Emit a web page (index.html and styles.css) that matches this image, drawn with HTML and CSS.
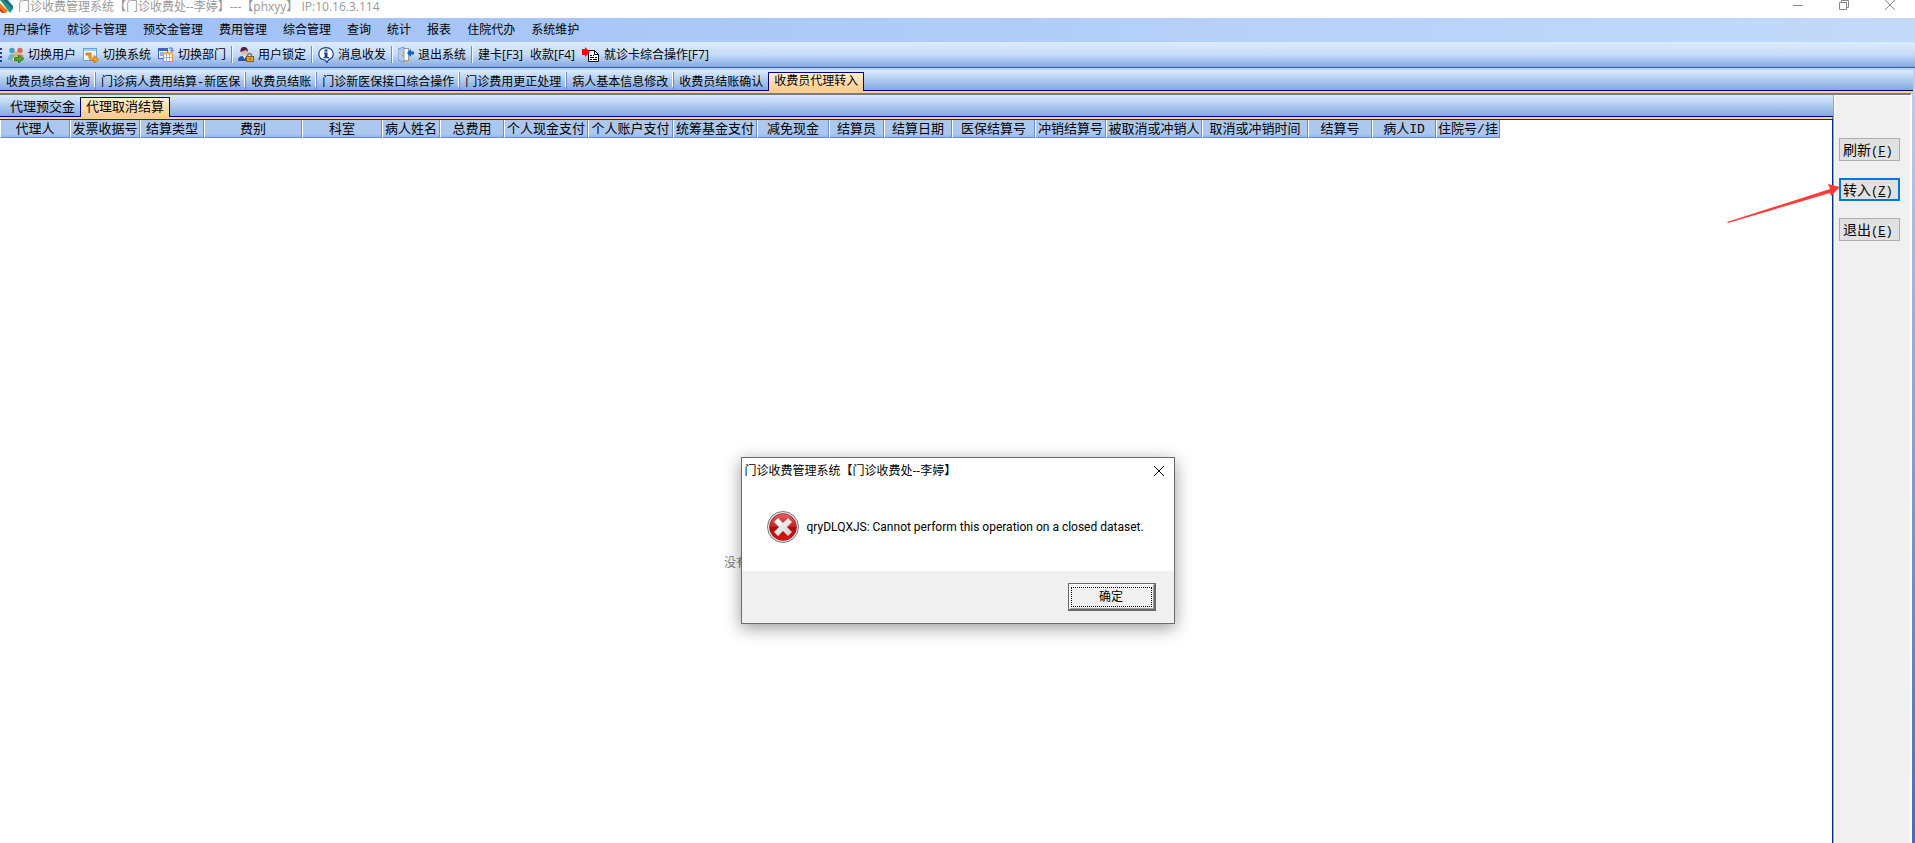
FILE: index.html
```html
<!DOCTYPE html>
<html lang="zh-CN">
<head>
    <meta charset="UTF-8">
    <meta name="viewport" content="width=device-width, initial-scale=1.0">
    <title>门诊收费管理系统</title>
    <link rel="stylesheet" href="styles.css">
</head>
<body>
    <header class="titlebar">
        <svg class="app-icon" width="14" height="14" viewBox="0 0 14 14">
            <path d="M0 0h8l5 6v3l-3 4H7L0 5z" fill="#1b9a8c"/>
            <path d="M3 0h4l6 7v2z" fill="#2d5f75"/>
            <path d="M0 0l10 13H7L0 5z" fill="#fff"/>
            <path d="M0 3l8 8-3 2H3L0 10z" fill="#ef7a1a"/>
            <path d="M0 8l4 5H2L0 11z" fill="#c8371c"/>
        </svg>
        <div class="title-text">门诊收费管理系统【门诊收费处--李婷】---【phxyy】 IP:10.16.3.114</div>
        <div class="window-buttons">
            <button type="button" aria-label="最小化"><svg width="12" height="12" viewBox="0 0 12 12"><path d="M1 5.500h10"/></svg></button>
            <button type="button" aria-label="还原"><svg width="12" height="12" viewBox="0 0 12 12"><path d="M1.500 2.500h7v7h-7zM3.500 2.500v-2h7v7h-2"/></svg></button>
            <button type="button" aria-label="关闭"><svg width="12" height="12" viewBox="0 0 12 12"><path d="M1 0l10 10M11 0L1 10"/></svg></button>
        </div>
    </header>

    <!-- 菜单 -->
    <nav class="menu">
        <a href="#">用户操作</a>
        <a href="#">就诊卡管理</a>
        <a href="#">预交金管理</a>
        <a href="#">费用管理</a>
        <a href="#">综合管理</a>
        <a href="#">查询</a>
        <a href="#">统计</a>
        <a href="#">报表</a>
        <a href="#">住院代办</a>
        <a href="#">系统维护</a>
    </nav>

    <!-- 工具栏 -->
    <div class="toolbar">
        <span class="grip"></span>
        <button type="button">
            <svg width="16" height="16" viewBox="0 0 16 16">
                <circle cx="4" cy="3.500" r="2.700" fill="#4b9bbd"/><path d="M0 13c0-4 1-6 4-6s4 2 4 6z" fill="#6db5d0"/>
                <circle cx="12" cy="3.500" r="2.700" fill="#d8695b"/><path d="M9 13c0-4 1-6 3.500-6S16 9 16 12z" fill="#e08a7c"/>
                <circle cx="8" cy="7" r="2.300" fill="#e9b06a"/><path d="M4 14c0-3 1.500-5 4-5s4 2 4 5z" fill="#f5e4c8" stroke="#b98843" stroke-width=".6"/>
                <path d="M6.500 10.500h4V8l5 4-5 4v-2.500h-4z" fill="#44b02c" stroke="#1c6b13" stroke-width=".8"/>
            </svg>
            切换用户
        </button>
        <button type="button">
            <svg width="16" height="16" viewBox="0 0 16 16">
                <rect x=".5" y="1.500" width="13" height="12" fill="#f4fafe" stroke="#5da9dc"/>
                <path d="M1 2h12v2H1z" fill="#9fd0f0"/>
                <path d="M3 6h5v3c0 2 1 2 3 2V8.500l4.500 4L11 16v-2.500c-4 0-5-1-5-3.500V8H3z" fill="#f9a51c" stroke="#c5600a" stroke-width=".8"/>
            </svg>
            切换系统
        </button>
        <button type="button">
            <svg width="16" height="16" viewBox="0 0 16 16">
                <rect x=".5" y="1.500" width="9" height="10" fill="#e9f1fd" stroke="#3a67b7"/><path d="M0 1h10v3H0z" fill="#3a67b7"/>
                <path d="M2 6h3M2 8h3" stroke="#3a67b7"/>
                <rect x="5.500" y="5.500" width="9" height="9" fill="#fff" stroke="#d8942f"/><path d="M5 5h10v2.500H5z" fill="#f0b04a"/>
                <path d="M8.500 7v7M11.500 7v7M6 10.500h8" stroke="#9ab6dc"/>
                <path d="M11 1h3v3M12.500 3L14 4.500 15.500 3" fill="none" stroke="#3a67b7"/>
            </svg>
            切换部门
        </button>
        <span class="sep"></span>
        <button type="button">
            <svg width="16" height="16" viewBox="0 0 16 16">
                <circle cx="6" cy="4" r="3.500" fill="#e7b69d"/><path d="M2.500 5C2 1 4 0 6 0s4.500 1 3.500 5L8 3z" fill="#50264c"/>
                <path d="M0 14c0-4 2-5 6-5s5 1 5 5z" fill="#2455a6"/><path d="M5 9h3l-1.500 3z" fill="#fff"/>
                <path d="M9.500 10V8.500a2 2 0 0 1 4 0V10" fill="none" stroke="#777" stroke-width="1.300"/>
                <rect x="8.500" y="9.500" width="7" height="5" fill="#e9a33c" stroke="#8b5a1b"/><path d="M12 11v2" stroke="#5b3506"/>
            </svg>
            用户锁定
        </button>
        <span class="sep"></span>
        <button type="button">
            <svg width="16" height="16" viewBox="0 0 16 16">
                <path d="M8 .6c4.200 0 7.200 2.700 7.200 6.200 0 3-2 5.200-4.700 6L9 15.500 7 13C3 12.600.8 10.200.8 6.800.8 3.300 3.800.6 8 .6z" fill="#fff" stroke="#193c8d" stroke-width="1.200"/>
                <path d="M6.500 2.500h3v2h-3zM6 5.500h3.500V10H11v1.200H5.500V10h1.200V6.700H6z" fill="#173c94"/>
            </svg>
            消息收发
        </button>
        <span class="sep"></span>
        <button type="button">
            <svg width="16" height="16" viewBox="0 0 16 16">
                <rect x="3.500" y="1.500" width="7" height="12" fill="#fff" stroke="#8797bb"/>
                <path d="M0 2l6-2v15l-6-2z" fill="#b6cbef" stroke="#7184b3" stroke-width=".8"/>
                <circle cx="4.500" cy="8" r=".8" fill="#d39b22"/>
                <path d="M9 6l4-4v2.500h3v3h-3V10z" fill="#0b62c8"/><path d="M7 14h4l1-2" stroke="#d9a944" fill="none"/>
            </svg>
            退出系统
        </button>
        <span class="sep"></span>
        <button type="button">建卡[F3]</button>
        <button type="button">收款[F4]</button>
        <button type="button">
            <svg width="18" height="16" viewBox="0 0 18 16">
                <path d="M6.500 3.500h6l4 4v7h-10z" fill="#fff" stroke="#000"/><path d="M12.500 3.500v4h4" fill="none" stroke="#000"/>
                <path d="M8 8.500h2M11 8.500h1M8 10.500h4M13 10.500h2M8 12.500h2M11 12.500h4" stroke="#000"/>
                <path d="M0 2h3V0l5 5-5 5V8H0z" fill="#f00"/>
            </svg>
            就诊卡综合操作[F7]
        </button>
    </div>

    <!-- 打开的页面 -->
    <div class="tabs page-tabs">
        <button type="button" class="tab">收费员综合查询</button>
        <button type="button" class="tab">门诊病人费用结算-新医保</button>
        <button type="button" class="tab">收费员结账</button>
        <button type="button" class="tab">门诊新医保接口综合操作</button>
        <button type="button" class="tab">门诊费用更正处理</button>
        <button type="button" class="tab">病人基本信息修改</button>
        <button type="button" class="tab">收费员结账确认</button>
        <button type="button" class="tab active">收费员代理转入</button>
    </div>

    <div class="workspace">
        <main class="content">
            <div class="tabs sub-tabs">
                <button type="button" class="tab">代理预交金</button>
                <button type="button" class="tab active">代理取消结算</button>
            </div>
            <div class="grid">
                <table class="grid-table">
                    <colgroup>
                        <col class="w70"><col class="w70"><col class="w64"><col class="w98"><col class="w80">
                        <col class="w58"><col class="w64"><col class="w84"><col class="w85"><col class="w84">
                        <col class="w72"><col class="w55"><col class="w68"><col class="w83"><col class="w71">
                        <col class="w96"><col class="w106"><col class="w64"><col class="w64"><col class="w64">
                    </colgroup>
                    <thead>
                        <tr>
                            <th>代理人</th>
                            <th>发票收据号</th>
                            <th>结算类型</th>
                            <th>费别</th>
                            <th>科室</th>
                            <th>病人姓名</th>
                            <th>总费用</th>
                            <th>个人现金支付</th>
                            <th>个人账户支付</th>
                            <th>统筹基金支付</th>
                            <th>减免现金</th>
                            <th>结算员</th>
                            <th>结算日期</th>
                            <th>医保结算号</th>
                            <th>冲销结算号</th>
                            <th>被取消或冲销人</th>
                            <th>取消或冲销时间</th>
                            <th>结算号</th>
                            <th>病人ID</th>
                            <th>住院号/挂</th>
                        </tr>
                    </thead>
                </table>
                <p class="no-data">没有</p>
            </div>
        </main>
        <aside class="side">
            <button type="button">刷新<span>(<u>F</u>)</span></button>
            <button type="button" class="focused">转入<span>(<u>Z</u>)</span></button>
            <button type="button">退出<span>(<u>E</u>)</span></button>
        </aside>
    </div>

    <!-- 指向“转入”按钮的箭头 -->
    <svg class="arrow" width="114" height="42" viewBox="0 0 114 42">
        <path d="M0 39L103 6l-2-5 12 3-9 9-1-3L1 40z" fill="#fd3b38"/>
    </svg>

    <!-- 错误提示框 -->
    <div class="dialog" role="alertdialog" aria-labelledby="dialogTitle">
        <div class="dialog-title">
            <span id="dialogTitle">门诊收费管理系统【门诊收费处--李婷】</span>
            <button type="button" aria-label="关闭"><svg width="12" height="12" viewBox="0 0 12 12"><path d="M1 1l10 10M11 1L1 11"/></svg></button>
        </div>
        <div class="dialog-body">
            <svg width="32" height="32" viewBox="0 0 32 32">
                <defs>
                    <linearGradient id="red" x1="0" y1="0" x2="0" y2="1">
                        <stop offset="0" stop-color="#e06060"/>
                        <stop offset=".48" stop-color="#c92626"/>
                        <stop offset=".52" stop-color="#ab0b0b"/>
                        <stop offset="1" stop-color="#e01515"/>
                    </linearGradient>
                    <linearGradient id="cross" x1="0" y1="0" x2="1" y2="1">
                        <stop offset="0" stop-color="#fff"/>
                        <stop offset="1" stop-color="#cfcfcf"/>
                    </linearGradient>
                </defs>
                <circle cx="16" cy="16" r="15.500" fill="#e8e8e8" stroke="#777"/>
                <circle cx="16" cy="16" r="13.500" fill="url(#red)" stroke="#8d1414" stroke-width=".6"/>
                <path d="M11 7l5 5 5-5 4 4-5 5 5 5-4 4-5-5-5 5-4-4 5-5-5-5z" fill="url(#cross)"/>
            </svg>
            <p>qryDLQXJS: Cannot perform this operation on a closed dataset.</p>
        </div>
        <div class="dialog-footer">
            <button type="button"><span>确定</span></button>
        </div>
    </div>
</body>
</html>
```

FILE: styles.css
```css
* {
    box-sizing: border-box;
}
body {
    margin: 0;
    height: 100vh;
    overflow: hidden;
    display: flex;
    flex-direction: column;
    position: relative;
    font-family: "Open Sans", "Noto Sans CJK SC", sans-serif;
    font-size: 12px;
    line-height: 16px;
    color: #000;
    background: linear-gradient(#c3daf9, #3b6fc8);
}
button {
    font: inherit;
    color: inherit;
    margin: 0;
    padding: 0;
    border: none;
    background: none;
    white-space: nowrap;
}
svg {
    display: block;
    flex: none;
}

/* 标题栏 */
.titlebar {
    flex: none;
    display: flex;
    height: 18px;
    background: #fff;
    color: #999;
}
.app-icon {
    margin-right: 4px;
}
.title-text {
    flex: 1;
    line-height: 14px;
    white-space: nowrap;
}
.window-buttons {
    display: flex;
    align-items: flex-start;
    gap: 34px;
    padding-right: 19px;
}
.window-buttons svg {
    fill: none;
    stroke: #888;
}

/* 菜单 */
.menu {
    flex: none;
    display: flex;
    align-items: center;
    gap: 16px;
    height: 24px;
    padding-left: 3px;
    background: linear-gradient(to right, #9ebef5, #c3daf9);
}
.menu a {
    color: #000;
    text-decoration: none;
}

/* 工具栏 */
.toolbar {
    flex: none;
    display: flex;
    align-items: center;
    height: 26px;
    border-bottom: 1px solid #3b619c;
    border-radius: 0 3px 0 0;
    background: linear-gradient(#ddecfe, #c5dbf8 50%, #81a9e2);
}
.toolbar button {
    display: flex;
    align-items: center;
    gap: 4px;
    padding: 0 3px 0 4px;
}
.toolbar .grip {
    width: 2px;
    height: 14px;
    margin-right: 2px;
    background: repeating-linear-gradient(#27417e 0, #27417e 2px, transparent 2px, transparent 4px);
}
.toolbar .sep {
    width: 2px;
    height: 17px;
    margin: 0 1px 0 2px;
    border-left: 1px solid #6a8ccb;
    border-right: 1px solid #f1f9ff;
}

/* 标签页 */
.tabs {
    flex: none;
    display: flex;
    align-items: flex-end;
    border-bottom: 1px solid #000080;
    background: linear-gradient(#ddecfe, #81a9e2);
}
.tab {
    height: 18px;
    font-family: "Liberation Mono", "Noto Sans CJK SC", monospace;
}
.page-tabs {
    height: 21px;
    margin: 2px 2px 0 0;
}
.page-tabs .tab {
    padding: 2px 5px 0;
    border-right: 1px solid #6a8ccb;
    background: linear-gradient(#fff, #fff) right top / 1px 15px no-repeat;
    line-height: 18px;
}
.page-tabs .tab:first-child {
    padding-left: 6px;
}
.page-tabs .tab:nth-last-child(2) {
    border-right-color: transparent;
    background: none;
}
.sub-tabs {
    height: 22px;
    padding-left: 4px;
    font-size: 13px;
}
.sub-tabs .tab {
    height: 20px;
    padding: 2px 6px 0;
    line-height: 20px;
}
.page-tabs .tab.active,
.sub-tabs .tab.active {
    margin-bottom: -1px;
    border: 1px solid #000080;
    border-bottom: none;
    background: linear-gradient(#ffefcf, #ffcb8c);
}
.page-tabs .tab.active {
    height: 19px;
    margin-left: -1px;
    padding-top: 1px;
    line-height: 17px;
}
.sub-tabs .tab.active {
    height: 20px;
    margin-left: -1px;
    padding: 1px 5px 0;
    line-height: 18px;
}

/* 工作区 */
.workspace {
    flex: 1;
    min-height: 0;
    display: flex;
    margin-right: 3px;
    border-top: 2px solid #ffcf91;
}
.content {
    flex: 1;
    min-width: 0;
    display: flex;
    flex-direction: column;
    border-top: 2px solid #7a7a7a;
}
.grid {
    flex: 1;
    min-height: 0;
    overflow: hidden;
    border-top: 2px solid #ffcf91;
    border-right: 1px solid #002d96;
    background: linear-gradient(#002d96, #002d96) top / 100% 1px no-repeat #fff;
}
.grid-table {
    width: 1500px;
    margin-top: 1px;
    table-layout: fixed;
    border-collapse: separate;
    border-spacing: 0;
    font-size: 13px;
}
.grid-table th {
    height: 18px;
    padding: 2px 0 0;
    border-left: 1px solid #fff;
    border-right: 1px solid #6a8ccb;
    border-bottom: 1px solid #6a8ccb;
    background: linear-gradient(#adc8ef 80%, #94b6e8);
    font-family: "Liberation Mono", "Noto Sans CJK SC", monospace;
    font-weight: normal;
    line-height: 15px;
    text-align: center;
    white-space: nowrap;
    overflow: hidden;
}
.w55 { width: 55px; }
.w58 { width: 58px; }
.w64 { width: 64px; }
.w68 { width: 68px; }
.w70 { width: 70px; }
.w71 { width: 71px; }
.w72 { width: 72px; }
.w80 { width: 80px; }
.w83 { width: 83px; }
.w84 { width: 84px; }
.w85 { width: 85px; }
.w96 { width: 96px; }
.w98 { width: 98px; }
.w106 { width: 106px; }
.no-data {
    margin: 0;
    padding: 417px 0 0 724px;
    color: #808080;
}

/* 右侧按钮 */
.side {
    flex: none;
    width: 79px;
    display: flex;
    flex-direction: column;
    align-items: flex-start;
    gap: 17px;
    padding: 43px 0 0 5px;
    border: 2px solid #fff;
    border-top-color: #7a7a7a;
    border-left: 1px solid #a0a0a0;
    border-bottom: none;
    box-shadow: inset 1px 1px #fff;
    background: #f0f0f0;
}
.side button {
    width: 61px;
    height: 23px;
    padding-left: 3px;
    border: 1px solid #adadad;
    background: #e1e1e1;
    font-family: "Noto Sans CJK SC", sans-serif;
    font-size: 14px;
    line-height: 20px;
    text-align: left;
}
.side button.focused {
    padding-left: 2px;
    border: 2px solid #0078d7;
    line-height: 18px;
}
.side span {
    font-family: "Liberation Mono", monospace;
    font-size: 12px;
}
.arrow {
    position: absolute;
    top: 183px;
    right: 74px;
}

/* 提示框 */
.dialog {
    position: absolute;
    top: 457px;
    left: calc(50% - 217px);
    width: 434px;
    border: 1px solid #6b6b6b;
    background: #fff;
    box-shadow: 0 4px 16px rgba(0, 0, 0, 0.4);
}
.dialog-title {
    display: flex;
    align-items: center;
    justify-content: space-between;
    height: 25px;
    padding: 0 9px 0 3px;
}
.dialog-title svg {
    fill: none;
    stroke: #000;
}
.dialog-body {
    display: flex;
    align-items: center;
    gap: 8px;
    height: 88px;
    padding: 0 25px;
}
.dialog-body p {
    margin: 0;
    font-family: Roboto, sans-serif;
    white-space: nowrap;
}
.dialog-footer {
    display: flex;
    justify-content: flex-end;
    padding: 12px 18px;
    background: #f0f0f0;
}
.dialog-footer button {
    width: 88px;
    height: 28px;
    padding: 2px;
    border: 1px solid #696969;
    border-right-width: 2px;
    border-bottom-width: 2px;
    box-shadow: inset 1px 1px #fff, inset -1px -1px #a0a0a0;
}
.dialog-footer span {
    display: block;
    border: 1px dotted #000;
    line-height: 18px;
}
```
